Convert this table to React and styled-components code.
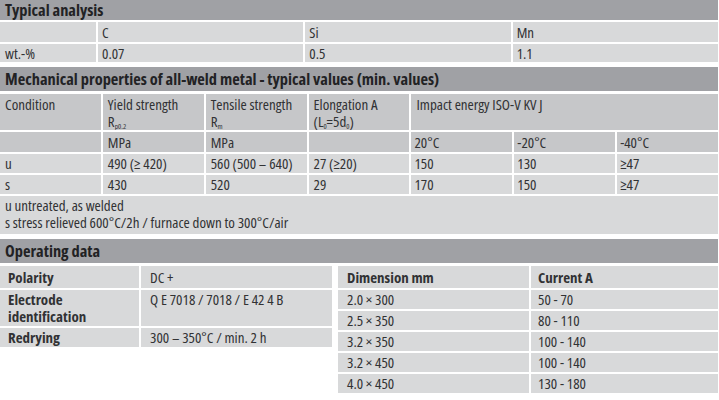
import React from "react";
import styled, { createGlobalStyle } from "styled-components";

const GlobalStyle = createGlobalStyle`
  html, body {
    margin: 0;
    padding: 0;
    background: #ffffff;
  }
  body {
    font-family: "Open Sans", "Liberation Sans", Arial, sans-serif;
    font-stretch: 75%;
    font-size: 15px;
    color: #313234;
  }
`;

const Page = styled.div`
  width: 718px;
  display: flex;
  flex-direction: column;
`;

const Section = styled.section`
  display: flex;
  flex-direction: column;
  margin-bottom: ${(p) => (p.$gap === undefined ? 5 : p.$gap)}px;
`;

const Title = styled.h2`
  margin: 0 0 ${(p) => p.$below || 3}px 0;
  height: ${(p) => p.$h || 24}px;
  background: #a0a1a5;
  color: #222224;
  font-size: 16.4px;
  font-weight: 700;
  font-stretch: 75%;
  padding: 0 5px;
  display: flex;
  align-items: center;
  line-height: 20px;
  box-sizing: border-box;
  white-space: nowrap;
`;

const Grid = styled.div`
  display: grid;
  grid-template-columns: ${(p) => p.$cols};
  gap: 2px;
`;

const Cell = styled.div`
  background: ${(p) => (p.$head ? "#c6c7c9" : "#d8d9da")};
  height: ${(p) => p.$h}px;
  padding: ${(p) => p.$pt || 0}px ${(p) => (p.$pl === undefined ? 5 : p.$pl)}px 0;
  box-sizing: border-box;
  line-height: ${(p) => (p.$pt ? "17px" : `${p.$h}px`)};
  font-weight: ${(p) => (p.$bold ? 700 : 400)};
  grid-column: ${(p) => (p.$span ? `span ${p.$span}` : "auto")};
  white-space: nowrap;
  overflow: hidden;
`;

const Sub = styled.sub`
  font-size: 7.5px;
  vertical-align: -2px;
  line-height: 0;
`;

const Notes = styled.div`
  grid-column: 1 / -1;
  background: #d8d9da;
  height: 38px;
  padding: 1px 5px 0;
  box-sizing: border-box;
  line-height: 17px;
`;

const OperatingRow = styled.div`
  display: flex;
  gap: 6px;
  align-items: flex-start;
`;

const OpTable = styled(Grid)`
  width: ${(p) => p.$w}px;
  flex: none;
`;

const analysis = [
  { label: "", values: ["C", "Si", "Mn"], h: 20 },
  { label: "wt.-%", values: ["0.07", "0.5", "1.1"], h: 18 },
];

const mechRows = [
  ["u", "490 (≥ 420)", "560 (500 – 640)", "27 (≥20)", "150", "130", "≥47"],
  ["s", "430", "520", "29", "170", "150", "≥47"],
];

const dims = [
  ["2.0 × 300", "50 - 70"],
  ["2.5 × 350", "80 - 110"],
  ["3.2 × 350", "100 - 140"],
  ["3.2 × 450", "100 - 140"],
  ["4.0 × 450", "130 - 180"],
];

export default function App() {
  return (
    <>
      <GlobalStyle />
      <Page>
        <Section>
          <Title $h={20} $below={2}>Typical analysis</Title>
          <Grid $cols="96px 1fr 1fr 1fr">
            {analysis.map((r, i) => (
              <React.Fragment key={i}>
                <Cell $h={r.h}>{r.label}</Cell>
                {r.values.map((v, j) => (
                  <Cell key={j} $h={r.h} $pl={4}>{v}</Cell>
                ))}
              </React.Fragment>
            ))}
          </Grid>
        </Section>

        <Section>
          <Title>Mechanical properties of all-weld metal - typical values (min. values)</Title>
          <Grid $cols="repeat(7, 1fr)">
            <Cell $head $h={36} $pt={2}>Condition</Cell>
            <Cell $head $h={36} $pt={2}>
              Yield strength<br />R<Sub>p0.2</Sub>
            </Cell>
            <Cell $head $h={36} $pt={2}>
              Tensile strength<br />R<Sub>m</Sub>
            </Cell>
            <Cell $head $h={36} $pt={2}>
              Elongation A<br />(L<Sub>0</Sub>=5d<Sub>0</Sub>)
            </Cell>
            <Cell $head $h={36} $pt={2} $span={3}>Impact energy ISO-V KV J</Cell>

            <Cell $head $h={20}></Cell>
            <Cell $head $h={20}>MPa</Cell>
            <Cell $head $h={20}>MPa</Cell>
            <Cell $head $h={20}></Cell>
            <Cell $head $h={20} $pl={3}>20°C</Cell>
            <Cell $head $h={20} $pl={3}>-20°C</Cell>
            <Cell $head $h={20} $pl={3}>-40°C</Cell>

            {mechRows.map((r, i) => (
              <React.Fragment key={i}>
                {r.map((v, j) => (
                  <Cell key={j} $h={19} $pl={j > 3 ? 3 : 5}>{v}</Cell>
                ))}
              </React.Fragment>
            ))}

            <Notes>
              u untreated, as welded
              <br />
              s stress relieved 600°C/2h / furnace down to 300°C/air
            </Notes>
          </Grid>
        </Section>

        <Section $gap={0}>
          <Title>Operating data</Title>
          <OperatingRow>
            <OpTable $w={332} $cols="139px 1fr">
              <Cell $bold $h={22} $pl={8}>Polarity</Cell>
              <Cell $h={22} $pl={9}>DC +</Cell>
              <Cell $bold $h={36} $pl={8} $pt={1}>Electrode<br />identification</Cell>
              <Cell $h={36} $pl={9} $pt={1}>Q E 7018 / 7018 / E 42 4 B</Cell>
              <Cell $bold $h={19} $pl={8}>Redrying</Cell>
              <Cell $h={19} $pl={9}>300 – 350°C / min. 2 h</Cell>
            </OpTable>
            <OpTable $w={380} $cols="191px 1fr">
              <Cell $bold $h={22} $pl={9}>Dimension mm</Cell>
              <Cell $bold $h={22} $pl={7}>Current A</Cell>
              {dims.map((d, i) => (
                <React.Fragment key={i}>
                  <Cell $h={19} $pl={9}>{d[0]}</Cell>
                  <Cell $h={19} $pl={7}>{d[1]}</Cell>
                </React.Fragment>
              ))}
            </OpTable>
          </OperatingRow>
        </Section>
      </Page>
    </>
  );
}
